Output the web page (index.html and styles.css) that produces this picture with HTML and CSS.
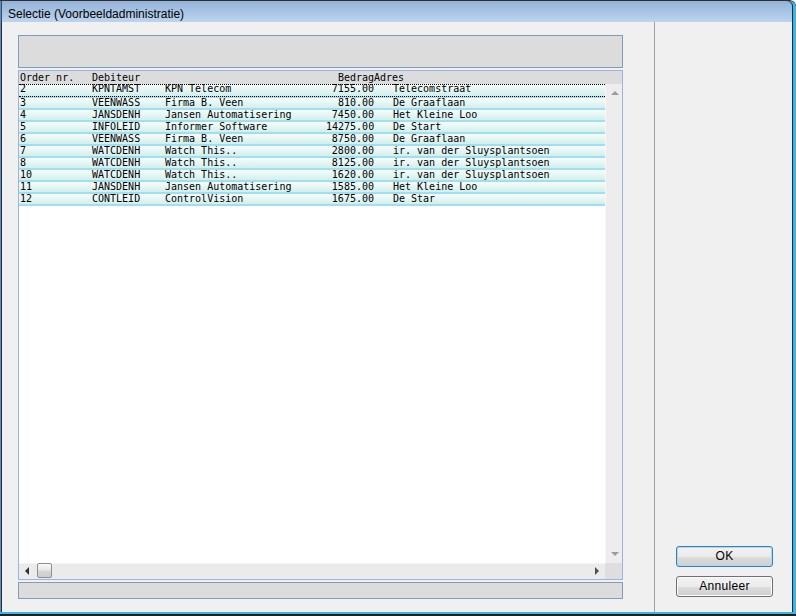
FILE: index.html
```html
<!DOCTYPE html>
<html lang="nl">
<head>
<meta charset="utf-8">
<title>Selectie (Voorbeeldadministratie)</title>
<link rel="stylesheet" href="styles.css">
</head>
<body>
<div class="window">
  <div class="titlebar">Selectie (Voorbeeldadministratie)</div>
  <div class="client">
    <div class="main">
      <div class="filterbox"></div>
      <div class="list">
        <div class="list-head grid">
          <span>Order nr.</span><span>Debiteur</span><span></span><span class="num">Bedrag</span><span>Adres</span>
        </div>
        <div class="list-body">
          <div class="rows">
            <div class="row grid first focused"><span>2</span><span>KPNTAMST</span><span>KPN Telecom</span><span class="num">7155.00</span><span class="adr">Telecomstraat</span></div>
            <div class="row grid"><span>3</span><span>VEENWASS</span><span>Firma B. Veen</span><span class="num">810.00</span><span class="adr">De Graaflaan</span></div>
            <div class="row grid"><span>4</span><span>JANSDENH</span><span>Jansen Automatisering</span><span class="num">7450.00</span><span class="adr">Het Kleine Loo</span></div>
            <div class="row grid"><span>5</span><span>INFOLEID</span><span>Informer Software</span><span class="num">14275.00</span><span class="adr">De Start</span></div>
            <div class="row grid"><span>6</span><span>VEENWASS</span><span>Firma B. Veen</span><span class="num">8750.00</span><span class="adr">De Graaflaan</span></div>
            <div class="row grid"><span>7</span><span>WATCDENH</span><span>Watch This..</span><span class="num">2800.00</span><span class="adr">ir. van der Sluysplantsoen</span></div>
            <div class="row grid"><span>8</span><span>WATCDENH</span><span>Watch This..</span><span class="num">8125.00</span><span class="adr">ir. van der Sluysplantsoen</span></div>
            <div class="row grid"><span>10</span><span>WATCDENH</span><span>Watch This..</span><span class="num">1620.00</span><span class="adr">ir. van der Sluysplantsoen</span></div>
            <div class="row grid"><span>11</span><span>JANSDENH</span><span>Jansen Automatisering</span><span class="num">1585.00</span><span class="adr">Het Kleine Loo</span></div>
            <div class="row grid"><span>12</span><span>CONTLEID</span><span>ControlVision</span><span class="num">1675.00</span><span class="adr">De Star</span></div>
          </div>
          <div class="vscroll">
            <span class="varrow up"></span>
            <span class="varrow down"></span>
          </div>
        </div>
        <div class="hscroll-row">
          <div class="hscroll">
            <span class="harrow left"></span>
            <span class="thumb"></span>
            <span class="harrow right"></span>
          </div>
          <div class="corner"></div>
        </div>
      </div>
      <div class="statusbox"></div>
    </div>
    <div class="separator"></div>
    <div class="buttons">
      <button class="btn default">OK</button>
      <button class="btn">Annuleer</button>
    </div>
  </div>
</div>
</body>
</html>
```

FILE: styles.css
```css
* { box-sizing: border-box; }

html, body {
  margin: 0;
  padding: 0;
  background: #ffffff;
}

body {
  width: 796px;
  height: 616px;
  overflow: hidden;
}

.window {
  width: 796px;
  height: 616px;
  display: flex;
  flex-direction: column;
  border-top-right-radius: 6px;
  overflow: hidden;
  background: #f0f0f0;
}

.titlebar {
  height: 22px;
  flex: none;
  padding: 4px 0 0 8px;
  line-height: 18px;
  font-family: "Liberation Sans", Arial, sans-serif;
  font-size: 12px;
  color: #000;
  background: linear-gradient(#93b3d8, #bcd4ee);
  border-top: 1px solid #303030;
  border-top-right-radius: 6px;
  box-shadow:
    inset 1px 0 #5d8fcc,
    inset 2px 0 #3a4a5c,
    inset -3px 0 #3cb4e6,
    inset -4px 0 #2a2a2a;
}

.client {
  flex: 1;
  display: flex;
  padding: 0 4px 4px 2px;
  background: #f0f0f0;
  box-shadow:
    inset 0 -2px #202020,
    inset 0 -4px #3cb4e6,
    inset 1px 0 #5d8fcc,
    inset 2px 0 #2c2c2c,
    inset -3px 0 #3cb4e6,
    inset -4px 0 #2a2a2a;
}

.main {
  width: 605px;
  margin-left: 16px;
  margin-right: 31px;
  padding: 13px 0 13px;
  display: flex;
  flex-direction: column;
}

.filterbox {
  height: 33px;
  flex: none;
  background: #dcdcdc;
  border: 1px solid #7f9ebf;
}

.list {
  height: 510px;
  flex: none;
  margin-top: 2px;
  border: 1px solid #97b4e3;
  background: #fff;
  display: flex;
  flex-direction: column;
  font-family: "DejaVu Sans Mono", monospace;
  font-size: 10px;
  color: #000;
}

.grid {
  display: grid;
  grid-template-columns: 72px 73px 161px 48px 1fr;
  padding-left: 1px;
  white-space: pre;
}

.num { text-align: right; }

.list-head {
  height: 13px;
  padding-top: 1px;
  line-height: 12px;
  background: #dcdcdc;
  flex: none;
}

.list-body {
  height: 479px;
  flex: none;
  display: flex;
}

.rows {
  width: 586px;
  display: flex;
  flex-direction: column;
  background: #fff;
}

.row {
  height: 12px;
  line-height: 10px;
  border-bottom: 2px solid #9fdff0;
  background: linear-gradient(#f6fdfc, #d3eeea);
}

.row.first {
  height: 14px;
  padding-bottom: 2px;
}

.row .adr { padding-left: 19px; }

.focused { position: relative; }

.focused::after {
  content: "";
  position: absolute;
  left: 0;
  right: 0;
  top: 0;
  height: 11px;
  border-top: 1px dotted #000;
  border-bottom: 1px dotted #000;
}

.vscroll {
  width: 17px;
  display: flex;
  flex-direction: column;
  justify-content: space-between;
  align-items: center;
  padding: 7px 0 7px 1px;
  background: #ededed;
  border-left: 1px solid #f7f7f7;
}

.varrow {
  width: 0;
  height: 0;
  border-left: 4px solid transparent;
  border-right: 4px solid transparent;
}

.varrow.up { border-bottom: 4px solid #9c9c9c; }
.varrow.down { border-top: 4px solid #9c9c9c; }

.hscroll-row {
  height: 16px;
  flex: none;
  display: flex;
}

.hscroll {
  width: 586px;
  display: flex;
  align-items: flex-start;
  padding-left: 6px;
  background: #ebebeb;
  border-top: 1px solid #f4f4f4;
}

.harrow {
  width: 0;
  height: 0;
  margin-top: 3px;
  border-top: 4px solid transparent;
  border-bottom: 4px solid transparent;
}

.harrow.left { border-right: 4px solid #303030; }

.harrow.right {
  border-left: 4px solid #505050;
  margin-left: auto;
  margin-right: 6px;
}

.thumb {
  width: 15px;
  height: 15px;
  margin-left: 8px;
  margin-top: -1px;
  border: 1px solid #8e8f8f;
  border-radius: 2px;
  background: linear-gradient(#f7f7f7, #e8e8e8 45%, #d6d6d6 55%, #cdcdcd);
}

.corner {
  width: 17px;
  background: #dedede;
}

.statusbox {
  height: 17px;
  flex: none;
  margin-top: 2px;
  background: #dcdcdc;
  border: 1px solid #7f9ebf;
}

.separator {
  width: 1px;
  flex: none;
  background: #a0a0a0;
}

.buttons {
  flex: 1;
  display: flex;
  flex-direction: column;
  justify-content: flex-end;
  gap: 9px;
  padding: 0 0 15px 21px;
}

.btn {
  width: 97px;
  height: 21px;
  padding: 0;
  margin: 0;
  border: 1px solid #707070;
  border-radius: 3px;
  background: linear-gradient(#f2f2f2 0%, #ebebeb 50%, #dddddd 51%, #cfcfcf 100%);
  font-family: "Liberation Sans", Arial, sans-serif;
  font-size: 12px;
  letter-spacing: 0.3px;
  color: #000;
  line-height: 19px;
  box-shadow: inset 0 0 0 1px #fbfbfb;
}

.btn.default {
  border-color: #3c7fb1;
  box-shadow: inset 0 0 0 1px #a6ddf5;
}
```
